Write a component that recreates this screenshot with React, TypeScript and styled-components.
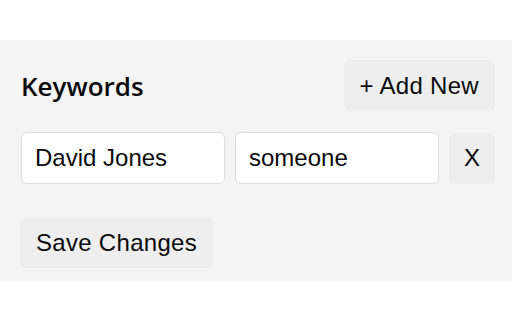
import { useState } from 'react';
import styled, { createGlobalStyle } from 'styled-components';

const GlobalStyle = createGlobalStyle`
  html, body {
    margin: 0;
    padding: 0;
    background: #ffffff;
  }
`;

const Page = styled.main`
  padding-top: 40px;
`;

const Panel = styled.section`
  display: flex;
  flex-flow: column nowrap;
  background: #f4f4f4;
  padding: 20px 17px 13px 20px;
`;

const Header = styled.div`
  display: flex;
  flex-flow: row nowrap;
  align-items: center;
  justify-content: space-between;
`;

const Title = styled.h2`
  margin: 0;
  padding-left: 1px;
  font-family: 'Open Sans', 'Noto Sans', sans-serif;
  font-weight: 600;
  font-size: 26px;
  color: #0a0a0a;
`;

const Button = styled.button<{ $square?: boolean }>`
  height: 51px;
  padding: 0 ${(p) => (p.$square ? '15px' : '16px')};
  border: none;
  border-radius: 6px;
  background: #eeeeee;
  font-family: 'Liberation Sans', Arial, sans-serif;
  font-size: 24px;
  letter-spacing: 0.3px;
  color: #0a0a0a;
  cursor: pointer;
`;

const Row = styled.div`
  display: flex;
  flex-flow: row nowrap;
  align-items: center;
  gap: 10px;
  margin-top: 21px;
  padding-left: 1px;
`;

const Input = styled.input`
  width: 204px;
  height: 52px;
  box-sizing: border-box;
  padding: 0 13px;
  border: 1px solid #dddddd;
  border-radius: 6px;
  background: #ffffff;
  font-family: 'Liberation Sans', Arial, sans-serif;
  font-size: 24px;
  color: #0a0a0a;
  outline: none;
`;

const Footer = styled.div`
  margin-top: 33px;
`;

type Keyword = { name: string; email: string };

function App() {
  const [rows, setRows] = useState<Keyword[]>([{ name: 'David Jones', email: 'someone' }]);

  const update = (i: number, key: keyof Keyword, value: string) => {
    setRows(rows.map((r, idx) => (idx === i ? { ...r, [key]: value } : r)));
  };

  return (
    <Page>
      <GlobalStyle />
      <Panel>
        <Header>
          <Title>Keywords</Title>
          <Button onClick={() => setRows([...rows, { name: '', email: '' }])}>+ Add New</Button>
        </Header>
        {rows.map((row, i) => (
          <Row key={i}>
            <Input value={row.name} onChange={(e) => update(i, 'name', e.target.value)} />
            <Input value={row.email} onChange={(e) => update(i, 'email', e.target.value)} />
            <Button $square onClick={() => setRows(rows.filter((_, idx) => idx !== i))}>
              X
            </Button>
          </Row>
        ))}
        <Footer>
          <Button>Save Changes</Button>
        </Footer>
      </Panel>
    </Page>
  );
}

export default App;
